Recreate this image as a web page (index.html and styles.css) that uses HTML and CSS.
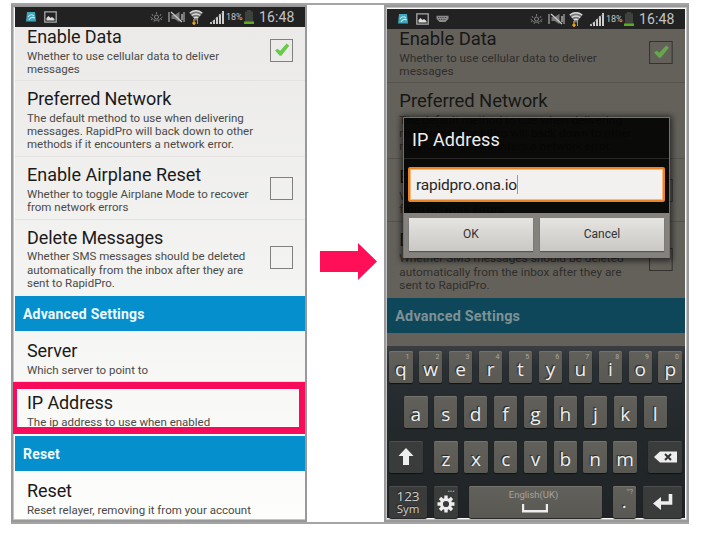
FILE: index.html
```html
<!DOCTYPE html>
<html lang="en">
<head>
<meta charset="utf-8">
<title>RapidPro settings</title>
<link rel="stylesheet" href="styles.css">
</head>
<body>
<svg class="defs" width="0" height="0">
  <symbol id="app" viewBox="0 0 11 10"><path fill="#3ea6bd" d="M1 0h8l1 9.500H0z"/><path d="M2 5q3-4 6-1M3 8q2-4 6-2" fill="none" stroke="#c5e8ea" stroke-width="1.1"/></symbol>
  <symbol id="pic" viewBox="0 0 13 12"><path d="M.8.8h11.4v10.4H.8z" fill="#222" stroke="#aaa" stroke-width="1.3"/><path d="M2.5 9.5V7l2-2 2 2 1.5-1 2.5 2v1.5z" fill="#ddd"/></symbol>
  <symbol id="kbd" viewBox="0 0 13 8"><path d="M.5.8h12v3L9.500 7h-6l-3-3.200z" fill="#8b8b8b"/><path d="M2 2.500h9M3 4.500h7" stroke="#333" stroke-width=".8" stroke-dasharray="1 .8"/></symbol>
  <symbol id="eye" viewBox="0 0 13 11"><path d="M.5 5q6 7 12 0M1 8l1.500-1.200M12 8l-1.500-1.200M4 10l.6-1.600M9 10l-.6-1.600M3 4l-1-2M6.500 2V0M10 4l1-2" fill="none" stroke="#777" stroke-width="1"/><circle cx="6.500" cy="5" r="2" fill="none" stroke="#888"/></symbol>
  <symbol id="mute" viewBox="0 0 17 12"><path d="M1 1v10M16 1v10" stroke="#aaa" stroke-width="1.200"/><path d="M3.500 4h3l5-3.300v10.600l-5-3.300h-3z" fill="#777"/><path d="M3 1l11 10M14 3v6" stroke="#ccc" stroke-width="1.200"/></symbol>
  <symbol id="wifi" viewBox="0 0 14 15"><path d="M.5 3q6.500-5 13 0l-6.500 8z" fill="#777"/><path d="M.7 3q6.300-4.500 12.600 0M2.700 5.500q4.300-3 8.600 0M4.800 8q2.200-1.500 4.400 0" fill="none" stroke="#ddd" stroke-width="1.300"/><path d="M5 9v5M3.500 12.500L5 14.500l1.500-2" fill="none" stroke="#e9a51b" stroke-width="1.300"/><path d="M8.500 14V9" stroke="#999"/></symbol>
  <symbol id="signal" viewBox="0 0 14 13"><path d="M0 13v-2h2v2zM3 13V9h2v4zM6 13V6h2v7zM9 13V3h2v10zM12 13V0h2v13z" fill="#ccc"/><path d="M0 12.500L13 1" stroke="#888" stroke-width=".7"/></symbol>
  <symbol id="battery" viewBox="0 0 10 14"><path d="M3 0h4v1.500h2V14H1V1.500h2z" fill="#3d423d"/><path d="M0 11.500h10V14H0z" fill="#5cab22"/></symbol>
  <symbol id="tick" viewBox="0 0 23 23"><path d="M4.500 12l3-2 3 2.500L18 4l3 2.500L12 18h-2z" fill="#6acb4a"/></symbol>
</svg>
<main class="figure">
  <section class="phone phone-left">
    <div class="status">
      <svg class="i-app"><use href="#app"/></svg><svg class="i-pic"><use href="#pic"/></svg>
      <div class="status-right"><svg class="i-eye"><use href="#eye"/></svg><svg class="i-mute"><use href="#mute"/></svg><svg class="i-wifi"><use href="#wifi"/></svg><svg class="i-signal"><use href="#signal"/></svg><span class="percent">18%</span><svg class="i-battery"><use href="#battery"/></svg><span class="clock">16:48</span></div>
    </div>
    <div class="list">
      <div class="row r-data"><div><h2>Enable Data</h2><p>Whether to use cellular data to deliver<br>messages</p></div><span class="check"><svg><use href="#tick"/></svg></span></div>
      <div class="row r-network"><div><h2>Preferred Network</h2><p>The default method to use when delivering<br>messages. RapidPro will back down to other<br>methods if it encounters a network error.</p></div></div>
      <div class="row r-airplane"><div><h2>Enable Airplane Reset</h2><p>Whether to toggle Airplane Mode to recover<br>from network errors</p></div><span class="check"></span></div>
      <div class="row r-delete"><div><h2>Delete Messages</h2><p>Whether SMS messages should be deleted<br>automatically from the inbox after they are<br>sent to RapidPro.</p></div><span class="check"></span></div>
      <h3 class="group">Advanced Settings</h3>
      <div class="row r-server"><div><h2>Server</h2><p>Which server to point to</p></div></div>
      <div class="row r-ip"><div><h2>IP Address</h2><p>The ip address to use when enabled</p></div></div>
      <h3 class="group">Reset</h3>
      <div class="row r-reset"><div><h2>Reset</h2><p>Reset relayer, removing it from your account</p></div></div>
    </div>
    <div class="highlight"></div>
  </section>
  <svg class="arrow" viewBox="0 0 57 37"><path d="M0 8h38V0l19 18.500L38 37v-8H0z" fill="#ff0f57"/></svg>
  <section class="phone phone-right">
    <div class="status">
      <svg class="i-app"><use href="#app"/></svg><svg class="i-pic"><use href="#pic"/></svg><svg class="i-kbd"><use href="#kbd"/></svg>
      <div class="status-right"><svg class="i-eye"><use href="#eye"/></svg><svg class="i-mute"><use href="#mute"/></svg><svg class="i-wifi"><use href="#wifi"/></svg><svg class="i-signal"><use href="#signal"/></svg><span class="percent">18%</span><svg class="i-battery"><use href="#battery"/></svg><span class="clock">16:48</span></div>
    </div>
    <div class="backdrop">
      <div class="list">
        <div class="row r-data"><div><h2>Enable Data</h2><p>Whether to use cellular data to deliver<br>messages</p></div><span class="check"><svg><use href="#tick"/></svg></span></div>
        <div class="row r-network"><div><h2>Preferred Network</h2><p>The default method to use when delivering<br>messages. RapidPro will back down to other<br>methods if it encounters a network error.</p></div></div>
        <div class="row r-airplane"><div><h2>Enable Airplane Reset</h2><p>Whether to toggle Airplane Mode to recover<br>from network errors</p></div><span class="check"></span></div>
        <div class="row r-delete"><div><h2>Delete Messages</h2><p>Whether SMS messages should be deleted<br>automatically from the inbox after they are<br>sent to RapidPro.</p></div><span class="check"></span></div>
        <h3 class="group">Advanced Settings</h3>
      </div>
    </div>
    <div class="keyboard">
      <div class="keys"><div class="key">q<sup>1</sup></div><div class="key">w<sup>2</sup></div><div class="key">e<sup>3</sup></div><div class="key">r<sup>4</sup></div><div class="key">t<sup>5</sup></div><div class="key">y<sup>6</sup></div><div class="key">u<sup>7</sup></div><div class="key">i<sup>8</sup></div><div class="key">o<sup>9</sup></div><div class="key">p<sup>0</sup></div></div>
      <div class="keys home"><div class="key">a</div><div class="key">s</div><div class="key">d</div><div class="key">f</div><div class="key">g</div><div class="key">h</div><div class="key">j</div><div class="key">k</div><div class="key">l</div></div>
      <div class="keys lower"><div class="key dark shift"><svg width="16" height="18" viewBox="0 0 16 18"><path d="M8 0l7.500 8H11v9H5V8H.5z" fill="#eee"/></svg></div><div class="key">z</div><div class="key">x</div><div class="key">c</div><div class="key">v</div><div class="key">b</div><div class="key">n</div><div class="key">m</div><div class="key dark back"><svg width="23" height="12" viewBox="0 0 23 12"><path d="M0 6l6-5.500h17v11H6z" fill="#eee"/><path d="M11 3l6 6M17 3l-6 6" stroke="#333" stroke-width="2"/></svg></div></div>
      <div class="keys bottom"><div class="key dark sym"><span>123</span><span>Sym</span></div><div class="key dark gear"><svg width="18" height="18" viewBox="-9 -9 18 18"><g stroke="#eee" stroke-width="3.400"><path d="M0-8.500V-4M0 8.500V4M-8.500 0H-4M8.500 0H4M-6-6l3 3M6-6L3-3M-6 6l3-3M6 6L3 3"/></g><circle r="4.600" fill="none" stroke="#eee" stroke-width="3"/></svg><sup>•••</sup></div><div class="key space"><span>English(UK)</span><svg width="26" height="9" viewBox="0 0 26 9"><path d="M1 0v7.300h24V0" fill="none" stroke="#eee" stroke-width="2.400"/></svg></div><div class="key dot">.<sup>"'?</sup></div><div class="key dark enter"><svg width="20" height="16" viewBox="0 0 20 16"><path d="M17.500 0v9H6" fill="none" stroke="#eee" stroke-width="3.600"/><path d="M0 9.500L8 3v13z" fill="#eee"/></svg></div></div>
    </div>
    <div class="dialog">
      <div class="dialog-title">IP Address</div>
      <div class="dialog-body"><div class="field">rapidpro.ona.io<i class="caret"></i></div></div>
      <div class="dialog-actions"><div class="button">OK</div><div class="button">Cancel</div></div>
    </div>
  </section>
</main>
</body>
</html>
```
FILE: styles.css
```css
* { box-sizing: border-box; margin: 0; padding: 0; }
body { width: 720px; height: 540px; overflow: hidden; background: #fff; font-family: Roboto, "Liberation Sans", sans-serif; }
svg { display: block; flex: none; }
.defs { position: absolute; }
.figure { width: 678px; height: 521px; margin: 3px 0 0 11px; border: 2px solid #a4a4a4; border-right: 0; display: flex; align-items: flex-start; }
.phone { position: relative; flex: none; border: 2px solid #999; box-shadow: inset 0 0 0 1px #c4c4c6; background: #fafaf9; }
.phone-left { width: 296px; height: 517px; margin-left: -2px; padding: 0 0 0 2px; }
.phone-right { width: 305px; height: 517px; margin-left: 7px; padding: 2px 2px 0 1px; }
.arrow { width: 57px; height: 37px; margin: 238px 0 0 13px; }

.status { position: relative; height: 20px; background: #222; display: flex; align-items: center; padding-left: 11px; color: #c4c4c4; }
.phone-left .status, .phone-left .list { width: 290px; }
.phone-right .status { width: 298px; }
.status-right { margin-left: auto; display: flex; align-items: center; }
.i-app { width: 11px; height: 10px; }
.i-pic { width: 13px; height: 12px; margin-left: 7px; }
.i-kbd { width: 13px; height: 8px; margin-left: 7px; }
.i-eye { width: 13px; height: 11px; }
.i-mute { width: 17px; height: 12px; margin-left: 5px; }
.i-wifi { width: 14px; height: 15px; margin-left: 4px; }
.i-signal { width: 14px; height: 13px; margin-left: 7px; }
.percent { width: 18px; margin-left: 2px; font-size: 9px; white-space: nowrap; }
.i-battery { width: 10px; height: 14px; }
.clock { width: 36px; margin: 0 10px 0 5px; font-size: 14px; line-height: 20px; letter-spacing: .1px; }

.list { width: 290px; background: linear-gradient(#ebeae9, #f4f4f2 55%, #fdfdfc); }
.row { display: flex; justify-content: space-between; padding: 7px 12px 0 12px; border-bottom: 1px solid #e4e2e1; white-space: nowrap; overflow: hidden; }
.row h2 { font-size: 18px; font-weight: 400; line-height: 22px; letter-spacing: -.1px; color: #1a1a1a; }
.row p { margin-top: 1.800px; font-size: 11.500px; line-height: 13.330px; color: #4b4a48; }
.r-data { height: 54px; padding-top: 0; }
.r-data > div { margin-top: -1px; }
.r-network { height: 76px; }
.r-airplane { height: 62.500px; }
.r-delete { height: 76.200px; border-bottom: 0; }
.r-server { height: 51.500px; padding-top: 9px; }
.r-ip { height: 53.800px; border-bottom: 0; padding-top: 9.500px; }
.r-airplane h2 { letter-spacing: 0; }
.r-reset { height: 48px; padding-top: 9px; border-bottom: 0; }
.group { height: 35.200px; padding-left: 8px; background: #058fcd; color: #eefaff; font-size: 14px; font-weight: 700; line-height: 37px; letter-spacing: .2px; }
.check { width: 23px; height: 23px; border: 1.500px solid #81807e; }
.check svg { width: 20px; height: 20px; }
.r-data .check { margin-top: 12px; }
.r-airplane .check { margin-top: 13px; }
.r-delete .check { margin-top: 19.500px; }
.highlight { position: absolute; left: 0; top: 375px; width: 292px; height: 52px; border: solid #f70c5b; border-width: 7px 6px 7px 4px; }

.backdrop { width: 298px; height: 317px; background: #64615b; overflow: hidden; }
.backdrop .list { background: #64615b; transform: scaleX(1.0276); transform-origin: left top; }
.backdrop .row { border-color: #56534f; }
.backdrop h2 { color: #171715; }
.backdrop p { color: #302e2b; }
.backdrop .group { background: #0d4759; color: #7f9195; }
.backdrop .check { border-color: #343330; }
.backdrop .check svg { opacity: .65; }

.keyboard { position: relative; width: 298px; height: 172px; padding: 5px 3px 0 2px; background: linear-gradient(#3b3e41, #292f33 12%, #23282b 50%, #202426); }
.keys { display: flex; justify-content: space-between; height: 31.500px; margin-bottom: 13.500px; width: 293px; }
.home { width: 263px; margin-left: 15px; }
.bottom { margin-bottom: 0; }
.key { position: relative; width: 23.500px; height: 31.500px; border-radius: 2px; background: linear-gradient(#62605a, #5a5852); box-shadow: 0 1px 1px #111, inset 0 1px #74726d; color: #eee; font: 500 19px/36px "Open Sans", sans-serif; text-align: center; text-shadow: -1px -1px 1px #222; }
.key sup { position: absolute; top: 2px; right: 3px; color: #aaa8a2; font: 7px/8px Roboto, sans-serif; text-shadow: none; }
.dark { background: #3a3b3b; box-shadow: 0 1px 1px #111, inset 0 1px #4d4e4e; display: flex; align-items: center; justify-content: center; }
.shift { width: 34px; margin-right: 5px; }
.back { width: 34px; margin-left: 5px; }
.sym { width: 38px; flex-direction: column; color: #ccc; }
.sym span { font-size: 13.500px; line-height: 14px; }
.sym span + span { font-size: 11.500px; line-height: 12px; }
.gear svg { margin-top: 4px; }
.space { width: 133px; margin: 0 4px; display: flex; flex-direction: column; align-items: center; }
.space span { margin: 2px 0 0 -3px; color: #a5a39e; font: 9.500px/13px Roboto, sans-serif; text-shadow: none; }
.space svg { margin: 3px 0 0 0; }
.dot { line-height: 30px; }
.enter { width: 39px; }

.dialog { position: absolute; left: 17px; top: 110px; width: 267px; height: 141px; background: rgba(3,3,2,.93); border: 1px solid #74726d; box-shadow: 0 1px 6px 2px rgba(0,0,0,.6); }
.dialog-title { height: 41px; padding-left: 8px; border-bottom: 1px solid #292826; color: #eee; font-size: 18px; line-height: 44px; letter-spacing: .1px; }
.dialog-body { height: 54px; padding: 8px 4px 0; }
.field { height: 35px; padding-left: 6px; display: flex; align-items: center; background: #f3f1ef; border: 2px solid #ea8427; border-radius: 2px; box-shadow: inset 0 0 0 1px #f6ba7b; color: #262626; font-size: 15.500px; letter-spacing: -.2px; }
.caret { width: 1px; height: 19px; background: #999; }
.dialog-actions { height: 45px; padding: 5px; display: flex; gap: 7px; background: #85827d; }
.button { flex: 1; height: 33px; background: linear-gradient(#e5e4e1, #c9c8c4); box-shadow: 0 1px 1px #555; color: #333; font-size: 12px; line-height: 33px; text-align: center; }
```
